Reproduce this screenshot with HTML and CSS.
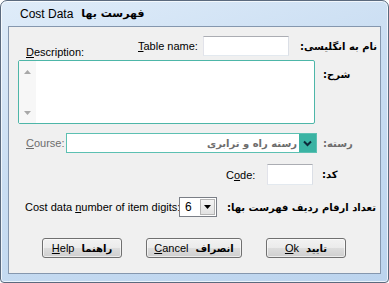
FILE: index.html
```html
<!DOCTYPE html>
<html lang="fa">
<head>
    <meta charset="UTF-8">
    <meta name="viewport" content="width=device-width, initial-scale=1.0">
    <title>Cost Data</title>
    <link rel="stylesheet" href="styles.css">
</head>
<body>
    <div class="window">
        <div class="titlebar">
            <span>Cost Data</span>
            <span class="fa" dir="rtl">فهرست بها</span>
        </div>
        <div class="client">
            <div class="row row-name">
                <span class="lbl lbl-desc"><u>D</u>escription:</span>
                <span class="lbl lbl-table"><u>T</u>able name:</span>
                <div class="edit edit-table"></div>
                <span class="fa lbl-fa lbl-fa-name" dir="rtl">نام به انگلیسی:</span>
            </div>

            <div class="row row-memo">
                <div class="memo">
                    <div class="memo-scroll">
                        <svg width="7" height="4" viewBox="0 0 7 4"><path d="M0 4 L3.5 0 L7 4 Z" fill="#a8a8a8"/></svg>
                        <svg width="7" height="4" viewBox="0 0 7 4"><path d="M0 0 L3.5 4 L7 0 Z" fill="#a8a8a8"/></svg>
                    </div>
                </div>
                <span class="fa lbl-fa lbl-fa-memo" dir="rtl">شرح:</span>
            </div>

            <div class="row row-course">
                <span class="lbl lbl-course"><u>C</u>ourse:</span>
                <div class="combo">
                    <span class="fa combo-text" dir="rtl">رسته راه و ترابری</span>
                    <span class="combo-btn">
                        <svg width="9" height="7" viewBox="0 0 9 7"><path d="M1 1.5 L4.5 5 L8 1.5" fill="none" stroke="#0d2a3a" stroke-width="2"/></svg>
                    </span>
                </div>
                <span class="fa lbl-fa lbl-fa-course" dir="rtl">رسته:</span>
            </div>

            <div class="row row-code">
                <span class="lbl lbl-code">C<u>o</u>de:</span>
                <div class="edit edit-code"></div>
                <span class="fa lbl-fa lbl-fa-code" dir="rtl">کد:</span>
            </div>

            <div class="row row-digits">
                <span class="lbl lbl-digits">Cost data <u>n</u>umber of item digits:</span>
                <div class="select">
                    <span class="select-value">6</span>
                    <span class="select-btn">
                        <svg width="7" height="4" viewBox="0 0 7 4"><path d="M0 0 L3.5 4 L7 0 Z" fill="#000"/></svg>
                    </span>
                </div>
                <span class="fa lbl-fa lbl-fa-digits" dir="rtl">تعداد ارقام ردیف فهرست بها:</span>
            </div>

            <div class="row row-buttons">
                <button class="btn btn-help"><span><u>H</u>elp</span><span class="fa">راهنما</span></button>
                <button class="btn btn-cancel"><span><u>C</u>ancel</span><span class="fa">انصراف</span></button>
                <button class="btn btn-ok"><span><u>O</u>k</span><span class="fa">تایید</span></button>
            </div>
        </div>
    </div>
</body>
</html>
```

FILE: styles.css
```css
html, body {
    margin: 0;
    padding: 0;
    background: #ffffff;
}
body {
    font-family: "Liberation Sans", "DejaVu Sans", sans-serif;
    font-size: 11px;
    color: #000;
}
.fa {
    font-family: "DejaVu Sans", sans-serif;
    font-size: 10px;
    font-weight: bold;
}
.window {
    width: 389px;
    height: 283px;
    box-sizing: border-box;
    border: 1px solid #5b6a7e;
    border-radius: 7px 7px 4px 4px;
    background: linear-gradient(160deg, #dfecf9 0%, #c9ddf2 45%, #bcd4ee 100%);
    box-shadow: inset 0 0 0 1px rgba(255, 255, 255, 0.7);
    padding: 0 7px 8px 7px;
    display: flex;
    flex-direction: column;
}
.titlebar {
    height: 25px;
    display: flex;
    align-items: center;
    gap: 8px;
    padding-left: 12px;
    font-size: 12px;
}
.titlebar .fa {
    font-size: 11px;
}
.client {
    flex: 1;
    background: #f0f0f0;
    border: 1px solid #8597ae;
}
.row {
    display: flex;
    align-items: center;
}
.lbl {
    white-space: nowrap;
}
.lbl-fa {
    white-space: nowrap;
}

/* table name row */
.row-name {
    margin-top: 9px;
    height: 20px;
}
.lbl-desc {
    margin-left: 17px;
    width: 112px;
    align-self: flex-end;
    margin-bottom: -2px;
}
.lbl-table {
    width: 60px;
}
.edit {
    box-sizing: border-box;
    background: #fff;
    border: 1px solid #abadb3;
    border-left-color: #e2e3ea;
    border-right-color: #dbdfe6;
    border-bottom-color: #e3e9ef;
}
.edit-table {
    margin-left: 5px;
    width: 86px;
    height: 20px;
}
.lbl-fa-name {
    margin-left: 11px;
}

/* memo row */
.row-memo {
    margin-top: 4px;
    align-items: flex-start;
}
.memo {
    margin-left: 9px;
    width: 297px;
    height: 64px;
    box-sizing: border-box;
    background: #fff;
    border: 1px solid #4db6a8;
    border-radius: 2px;
    display: flex;
}
.memo-scroll {
    width: 17px;
    display: flex;
    flex-direction: column;
    align-items: center;
    justify-content: space-between;
    padding: 9px 0 8px;
    box-sizing: border-box;
    background: #f7f7f7;
}
.lbl-fa-memo {
    margin-left: 8px;
    margin-top: 9px;
}

/* course row */
.row-course {
    margin-top: 9px;
}
.lbl-course {
    margin-left: 17px;
    width: 40px;
    color: #6d6d6d;
}
.combo {
    width: 251px;
    height: 20px;
    box-sizing: border-box;
    background: #fff;
    border: 1px solid #5cc0b2;
    display: flex;
    justify-content: flex-end;
    align-items: center;
}
.combo-text {
    color: #6d6d6d;
    margin-right: 2px;
}
.combo-btn {
    width: 17px;
    height: 18px;
    background: #3ab3a3;
    display: flex;
    align-items: center;
    justify-content: center;
}
.lbl-fa-course {
    margin-left: 6px;
    color: #6d6d6d;
}

/* code row */
.row-code {
    margin-top: 11px;
}
.lbl-code {
    margin-left: 217px;
    width: 41px;
}
.edit-code {
    width: 46px;
    height: 21px;
}
.lbl-fa-code {
    margin-left: 9px;
}

/* digits row */
.row-digits {
    margin-top: 12px;
}
.lbl-digits {
    margin-left: 16px;
    width: 154px;
}
.select {
    width: 38px;
    height: 20px;
    box-sizing: border-box;
    background: #fff;
    border: 1px solid #7a7e86;
    display: flex;
    align-items: center;
    justify-content: space-between;
    padding: 1px;
}
.select-value {
    margin-left: 4px;
    font-size: 12px;
}
.select-btn {
    width: 15px;
    height: 16px;
    box-sizing: border-box;
    border: 1px solid #b5b5b5;
    background: linear-gradient(#f4f4f4, #e2e2e2);
    display: flex;
    align-items: center;
    justify-content: center;
}
.lbl-fa-digits {
    margin-left: 10px;
}

/* buttons */
.row-buttons {
    margin-top: 21px;
    gap: 24px;
    padding-left: 33px;
}
.btn {
    height: 20px;
    box-sizing: border-box;
    border: 1px solid #707070;
    border-radius: 3px;
    background: linear-gradient(#f2f2f2 0%, #ebebeb 50%, #dddddd 50%, #cfcfcf 100%);
    box-shadow: inset 0 0 0 1px rgba(255, 255, 255, 0.6);
    font-family: "Liberation Sans", sans-serif;
    font-size: 11px;
    padding: 0;
    display: flex;
    align-items: center;
    justify-content: center;
    gap: 7px;
    color: #000;
}
.btn-help {
    width: 80px;
}
.btn-cancel {
    width: 96px;
}
.btn-ok {
    width: 80px;
}
```
